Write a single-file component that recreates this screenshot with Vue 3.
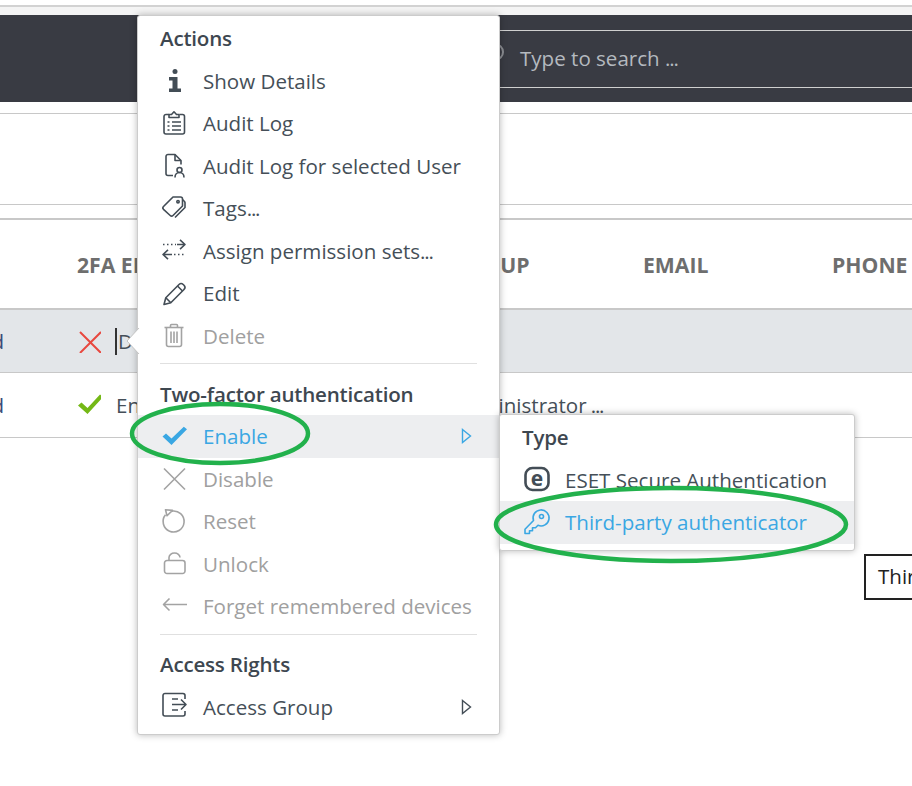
<template>
  <div class="page">
    <div class="top-strip"></div>
    <div class="dark-bar">
      <div class="search">
        <svg class="search-icon" width="22" height="22" viewBox="0 0 22 22">
          <circle cx="13" cy="9" r="8" />
          <path d="M7 15l-6 6" />
        </svg>
        <span>Type to search <span class="dots">...</span></span>
      </div>
    </div>
    <div class="toolbar"></div>

    <div class="table">
      <div class="table-row table-head">
        <div></div>
        <div>2FA ENABLED</div>
        <div>GROUP</div>
        <div>EMAIL</div>
        <div>PHONE</div>
      </div>
      <div v-for="row in rows" :key="row.label" class="table-row" :class="{ selected: row.selected }">
        <div class="state">Enabled</div>
        <div class="two-fa">
          <svg width="24" height="24" viewBox="0 0 24 24" :class="row.iconClass">
            <path :d="row.icon" />
          </svg>
          <span v-if="row.selected" class="caret"></span>
          <span>{{ row.label }}</span>
        </div>
        <div>{{ row.group }}<span v-if="row.group" class="dots"> ...</span></div>
        <div></div>
        <div></div>
      </div>
    </div>

    <div v-for="menu in menus" :key="menu.id" class="menu" :class="menu.id">
      <svg v-if="menu.id === 'main'" class="tail" width="16" height="28" viewBox="0 0 16 28">
        <path d="M14 1L2 14l12 13" />
      </svg>
      <template v-for="(row, i) in menu.rows" :key="i">
        <div v-if="row.divider" class="divider"></div>
        <div v-else-if="row.title" class="menu-title">{{ row.title }}</div>
        <div v-else class="menu-item" :class="{ active: row.active, disabled: row.disabled }">
          <svg v-if="row.logo" class="icon" width="24" height="24" viewBox="0 0 24 24">
            <rect x="1.5" y="0" width="23" height="22" rx="7" class="logo-ring" />
            <text x="13" y="17.5" text-anchor="middle" class="logo-e">e</text>
          </svg>
          <svg v-else class="icon" width="24" height="24" viewBox="0 0 24 24">
            <path v-for="d in row.icon" :key="d" :d="d" :class="{ filled: row.filled }" />
            <circle v-if="row.dot" :cx="row.dot[0]" :cy="row.dot[1]" :r="row.dot[2]" :class="{ filled: row.filled }" />
          </svg>
          <span>{{ row.label }}<span v-if="row.dots" class="dots">...</span></span>
          <svg v-if="row.more" class="more" width="11" height="16" viewBox="0 0 11 16">
            <path d="M1.5 1.5L9.5 8l-8 6.5z" />
          </svg>
        </div>
      </template>
    </div>

    <div class="tooltip">Third-party authenticator</div>

    <svg class="marks" width="912" height="786" viewBox="0 0 912 786">
      <ellipse cx="220" cy="433.5" rx="88" ry="29.5" />
      <ellipse cx="671" cy="524.5" rx="175" ry="36.5" />
    </svg>
  </div>
</template>

<script setup>
const rows = [
  {
    label: 'Disabled',
    group: '',
    selected: true,
    iconClass: 'cross',
    icon: 'M3 3l21 21M24 3L3 24'
  },
  {
    label: 'Enabled',
    group: 'Administrator',
    iconClass: 'tick',
    icon: 'M1 12.5l3.5-3 6 5.5L23 1.500l3 2.500L10.500 21z'
  }
]

const menus = [
  {
    id: 'main',
    rows: [
      { title: 'Actions' },
      {
        label: 'Show Details',
        filled: true,
        dot: [13, 2.5, 2.5],
        icon: ['M7 8h8.500v11.500H19V23H7v-3.500h3.500V11.500H7z']
      },
      {
        label: 'Audit Log',
        icon: [
          'M7 3.5H4a2 2 0 0 0-2 2V21a2 2 0 0 0 2 2h16.5a2 2 0 0 0 2-2V5.500a2 2 0 0 0-2-2h-3',
          'M7 6.500V3.500h2.500L12 .8l2.500 2.700H17v3z',
          'M5.500 11h2M10 11h9M5.500 15h2M10 15h9M5.500 19h2M10 19h9'
        ]
      },
      {
        label: 'Audit Log for selected User',
        icon: [
          'M11 21.500H6a2 2 0 0 1-2-2V2.500a2 2 0 0 1 2-2h7l6 6v4',
          'M13 .5v6h6',
          'M17.500 13.500a2.500 2.500 0 1 0 0 5a2.500 2.500 0 1 0 0-5z',
          'M13 23.500c0-3 2-5 4.500-5s4.500 2 4.500 5'
        ]
      },
      {
        label: 'Tags',
        dots: true,
        icon: [
          'M1.500 10.500L11 1h7.500a2 2 0 0 1 2 2v7L11 19.500a2 2 0 0 1-2.800 0l-6.700-6.200a2 2 0 0 1 0-2.800z',
          'M20.500 3.500l2 2a2 2 0 0 1 .5 1.500v4.500L13 21.500',
          'M16 4.500a1.200 1.200 0 1 0 0 2.400a1.200 1.200 0 1 0 0-2.400z'
        ]
      },
      {
        label: 'Assign permission sets',
        dots: true,
        icon: [
          'M15 5.500H23M18 .8l5 4.700-5 4.700',
          'M1 5.500h1.500M5 5.500h1.500M9 5.500h1.500M13 5.500h1',
          'M1 15.500H10M6 10.800l-5 4.700 5 4.700',
          'M12 15.500h1.500M16 15.500h1.500M20 15.500h1.500'
        ]
      },
      {
        label: 'Edit',
        icon: [
          'M2 23.500L3.800 16.800L17 3.500a3 3 0 0 1 4.200 0l.8.8a3 3 0 0 1 0 4.200L8.800 21.700z',
          'M3.800 16.800l5 4.900M15.500 5l5 5'
        ]
      },
      {
        label: 'Delete',
        disabled: true,
        icon: [
          'M2.500 3.500H21.500',
          'M8.500 3.500V1.500a1 1 0 0 1 1-1h5a1 1 0 0 1 1 1v2',
          'M4.500 3.500V20.500a2 2 0 0 0 2 2h11a2 2 0 0 0 2-2V3.500',
          'M9 7.500v11.500M12 7.500v11.500M15 7.500v11.500'
        ]
      },
      { divider: true },
      { title: 'Two-factor authentication' },
      {
        label: 'Enable',
        active: true,
        more: true,
        filled: true,
        icon: ['M.5 12.500L4 9.500l5.500 5L21.800 2.800 25 5.200 9.500 21z']
      },
      { label: 'Disable', disabled: true, icon: ['M2 1.500l21 21M23 1.500l-21 21'] },
      {
        label: 'Reset',
        disabled: true,
        icon: ['M9.500 2.200A10.500 10.500 0 1 1 3.500 5.800', 'M3.500 .8l7 .6-5.500 5.400z']
      },
      {
        label: 'Unlock',
        disabled: true,
        icon: [
          'M5 8.500h15.500a2.500 2.500 0 0 1 2.500 2.500v8a2.500 2.500 0 0 1-2.500 2.500H5a2.500 2.500 0 0 1-2.500-2.500v-8A2.500 2.500 0 0 1 5 8.500z',
          'M7 8.500V5.500a5.500 4.500 0 0 1 11 0'
        ]
      },
      {
        label: 'Forget remembered devices',
        disabled: true,
        icon: ['M1.500 10.500H25M7.500 4.500l-6 6 6 6']
      },
      { divider: true },
      { title: 'Access Rights' },
      {
        label: 'Access Group',
        more: true,
        icon: [
          'M23 4V.5a2 2 0 0 0-2-2H3a2 2 0 0 0-2 2V19a2 2 0 0 0 2 2h18a2 2 0 0 0 2-2v-3',
          'M10 9.500H24M19 4.500l5 5-5 5',
          'M10 4h6M10 15h6'
        ]
      }
    ]
  },
  {
    id: 'sub',
    rows: [
      { title: 'Type' },
      { label: 'ESET Secure Authentication', logo: true },
      {
        label: 'Third-party authenticator',
        active: true,
        icon: [
          'M9.500 10.500A8 8 0 1 1 14 15.300L11.500 17.800H8.500V20.800H5.500V23.500H1V19.300z',
          'M17.500 4.500a2 2 0 1 0 0 4a2 2 0 1 0 0-4z'
        ]
      }
    ]
  }
]
</script>

<style>
html,
body {
  margin: 0;
  background: #fff;
}
</style>

<style scoped>
.page {
  position: relative;
  width: 912px;
  height: 786px;
  overflow: hidden;
  background: #fff;
  font-family: "Open Sans", sans-serif;
  font-size: 20.55px;
  color: #454f58;
}

.dots {
  letter-spacing: -1.2px;
}

.top-strip {
  height: 8px;
  margin-top: 5px;
  background: #f4f4f4;
  border-top: 2px solid #d2d2d2;
}

.dark-bar {
  height: 87px;
  display: flex;
  align-items: center;
  background: #393b43;
}

.search {
  box-sizing: border-box;
  flex: 1;
  height: 58px;
  margin-left: 300px;
  padding: 0 0 2px 182px;
  display: flex;
  align-items: center;
  gap: 16px;
  border-top: 1px solid #cfcfcf;
  border-bottom: 1px solid #cfcfcf;
  color: #b4b9bf;
}

.search-icon {
  margin-top: -8px;
  fill: none;
  stroke: #8b8d92;
  stroke-width: 2;
}

.toolbar {
  height: 90px;
  margin-top: 11px;
  border-top: 1px solid #c8c8c8;
  border-bottom: 1px solid #c8c8c8;
}

.table {
  margin-top: 13px;
  border-top: 2px solid #c8c8c8;
}

.table-row {
  display: grid;
  grid-template-columns: 77px 377px 189px 189px 1fr;
  height: 64px;
  align-items: center;
  border-bottom: 1px solid #c8c8c8;
  white-space: nowrap;
}

.table-head {
  height: 88px;
  border-bottom-width: 2px;
  font-size: 21.2px;
  font-weight: 700;
  color: #6e6e6e;
}

.selected {
  height: 62px;
  background: #e3e6e9;
}

.state {
  display: flex;
  justify-content: flex-end;
  overflow: hidden;
  padding-right: 73px;
  color: #3a4a78;
}

.two-fa {
  display: flex;
  align-items: center;
  gap: 15px;
}

.selected .two-fa {
  gap: 0;
}

.selected .two-fa svg {
  margin-right: 14px;
}

.caret {
  width: 2px;
  height: 27px;
  margin-right: 1px;
  background: #333;
}

.cross path {
  fill: none;
  stroke: #e8483f;
  stroke-width: 2;
}

.tick path {
  fill: #74b816;
}

.menu {
  position: absolute;
  box-sizing: border-box;
  background: #fff;
  border: 1px solid #ccc;
  border-radius: 3px;
  box-shadow: 0 0 7px rgba(0, 0, 0, 0.28);
}

.main {
  left: 137px;
  top: 15px;
  width: 363px;
  height: 720px;
  padding-top: 1px;
}

.sub {
  left: 499px;
  top: 414px;
  width: 356px;
  height: 137px;
  padding-top: 1px;
}

.tail {
  position: absolute;
  left: -13px;
  top: 311px;
  fill: #fff;
  stroke: #c4c4c4;
}

.menu-title {
  height: 42.5px;
  line-height: 42.5px;
  padding-left: 22px;
  font-weight: 600;
  letter-spacing: -0.2px;
  color: #3e4750;
}

.menu-item {
  height: 42.5px;
  display: flex;
  align-items: center;
  gap: 17px;
  padding: 0 27px 0 24px;
  white-space: nowrap;
}

.menu-item.active {
  background: #edeef0;
  color: #3aa7e3;
}

.menu-item.disabled {
  color: #a0a0a0;
}

.icon {
  flex: none;
  overflow: visible;
  fill: none;
  stroke: #434d56;
  stroke-width: 1.6;
  stroke-linejoin: round;
}

.active .icon {
  stroke: #3aa7e3;
}

.disabled .icon {
  stroke: #a3a3a3;
}

.icon .filled {
  stroke: none;
  fill: #434d56;
}

.active .icon .filled {
  fill: #3aa7e3;
}

.logo-ring {
  stroke-width: 2.6;
}

.logo-e {
  font-family: "Open Sans", sans-serif;
  font-size: 21px;
  font-weight: 700;
  fill: #434d56;
  stroke: none;
}

.more {
  margin-left: auto;
  fill: none;
  stroke: #434d56;
  stroke-width: 1.4;
}

.active .more {
  stroke: #3aa7e3;
}

.divider {
  height: 1px;
  margin: 6px 22px 8.5px;
  background: #e0e0e0;
}

.tooltip {
  position: absolute;
  left: 864px;
  top: 554px;
  box-sizing: border-box;
  height: 46px;
  padding: 0 12px;
  line-height: 41px;
  border: 2.5px solid #222;
  color: #222;
  background: #fff;
  white-space: nowrap;
}

.marks {
  position: absolute;
  left: 0;
  top: 0;
  pointer-events: none;
  fill: none;
  stroke: #22b14c;
  stroke-width: 4.5;
}
</style>
